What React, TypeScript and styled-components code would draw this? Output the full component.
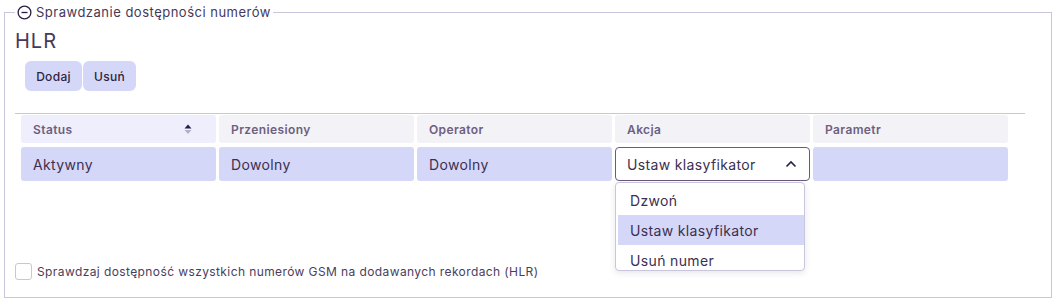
import styled, { createGlobalStyle } from "styled-components";

// GLOBAL
const GlobalStyle = createGlobalStyle`
  * { box-sizing: border-box; }
  body {
    margin: 0;
    background: #ffffff;
    font-family: Inter, "Open Sans", sans-serif;
    color: #3c2f50;
  }
`;

// STYLED
const Frame = styled.fieldset`
  margin: 3px 6px 6px 4px;
  padding: 7px 10px 17px 10px;
  border: 1px solid #c9c5dc;
  min-width: 0;
`;
const Legend = styled.legend`
  display: flex;
  align-items: center;
  gap: 4px;
  padding: 0 2px;
  font-size: 13px;
  line-height: 18px;
  letter-spacing: 0.5px;
  color: #45385a;
  svg {
    display: block;
  }
`;
const Title = styled.h2`
  margin: 0;
  font-size: 20px;
  font-weight: 400;
  line-height: 26px;
  letter-spacing: 1px;
  color: #45385a;
`;
const Toolbar = styled.div`
  display: flex;
  gap: 1px;
  margin: 7px 0 0 10px;
`;
const ToolButton = styled.button<{ $w: number }>`
  width: ${(p) => p.$w}px;
  height: 30px;
  border: none;
  border-radius: 6px;
  background: #d5d7f8;
  color: #2f2440;
  font-family: inherit;
  font-size: 12px;
  font-weight: 500;
  letter-spacing: 0.3px;
  cursor: pointer;
`;
const TableWrap = styled.div`
  position: relative;
  margin-top: 22px;
  width: 1010px;
  height: 150px;
  padding: 1px 0 0 6px;
  border-top: 1px solid #c9c5dc;
`;
const Grid = styled.div`
  display: grid;
  grid-template-columns: repeat(5, 195px);
  grid-template-rows: 28px 34px;
  column-gap: 3px;
  row-gap: 4px;
`;
const HeadCell = styled.div<{ $sorted?: boolean }>`
  display: flex;
  align-items: center;
  justify-content: space-between;
  padding: 0 24px 0 12px;
  border-radius: 3px;
  background: ${(p) => (p.$sorted ? "#eeeefc" : "#f3f2f7")};
  color: #6d5f80;
  font-size: 12px;
  font-weight: 600;
  letter-spacing: 0.4px;
`;
const BodyCell = styled.div`
  display: flex;
  align-items: center;
  padding: 0 12px;
  border-radius: 3px;
  background: #d5d7f8;
  font-size: 14px;
  letter-spacing: 0.35px;
  color: #3c2f50;
`;
const SelectBox = styled.div`
  position: relative;
  display: flex;
  align-items: center;
  justify-content: space-between;
  padding: 0 12px 0 11px;
  border: 1px solid #6a5b7e;
  border-radius: 4px;
  background: #ffffff;
  font-size: 14px;
  letter-spacing: 0.35px;
  color: #3c2f50;
`;
const Menu = styled.ul`
  position: absolute;
  top: 34px;
  left: -1px;
  width: 190px;
  height: 89px;
  margin: 0;
  padding: 2px 0 0 2px;
  list-style: none;
  overflow: hidden;
  background: #ffffff;
  border: 1px solid #c9c5dc;
  border-radius: 4px;
  box-shadow: 0 2px 6px rgba(60, 47, 80, 0.12);
  z-index: 2;
`;
const MenuItem = styled.li<{ $active?: boolean }>`
  height: 30px;
  display: flex;
  align-items: center;
  padding-left: 12px;
  font-size: 14px;
  letter-spacing: 0.35px;
  color: #3c2f50;
  background: ${(p) => (p.$active ? "#d5d7f8" : "transparent")};
`;
const CheckRow = styled.label`
  display: flex;
  align-items: center;
  gap: 5px;
  font-size: 12px;
  letter-spacing: 0.4px;
  color: #4a3d5c;
`;
const CheckBox = styled.span`
  width: 17px;
  height: 17px;
  border: 1px solid #c9c5dc;
  border-radius: 3px;
  background: #ffffff;
`;

// ICONS
const MinusCircle = () => (
  <svg width="15" height="15" viewBox="0 0 16 16">
    <circle cx="8" cy="8" r="6.8" fill="none" stroke="#2b1e40" strokeWidth="1.4" />
    <line x1="4.8" y1="8" x2="11.2" y2="8" stroke="#2b1e40" strokeWidth="1.4" />
  </svg>
);
const SortIcon = () => (
  <svg width="8" height="11" viewBox="0 0 8 11">
    <path d="M4 0.5 L7.5 4.5 H0.5 Z" fill="#2a1a4a" />
    <path d="M0.5 6 H7.5 L4 10 Z" fill="#b4b0bf" />
  </svg>
);
const ChevronUp = () => (
  <svg width="12" height="8" viewBox="0 0 12 8">
    <path d="M1.5 6.5 L6 2 L10.5 6.5" fill="none" stroke="#2b1e40" strokeWidth="1.6" />
  </svg>
);

const columns = ["Status", "Przeniesiony", "Operator", "Akcja", "Parametr"];
const options = ["Dzwoń", "Ustaw klasyfikator", "Usuń numer"];

const App = () => {
  return (
    <>
      <GlobalStyle />
      <Frame>
        <Legend>
          <MinusCircle />
          Sprawdzanie dostępności numerów
        </Legend>
        <Title>HLR</Title>
        <Toolbar>
          <ToolButton $w={57}>Dodaj</ToolButton>
          <ToolButton $w={53}>Usuń</ToolButton>
        </Toolbar>
        <TableWrap>
          <Grid>
            {columns.map((col) => (
              <HeadCell key={col} $sorted={col === "Status"}>
                {col}
                {col === "Status" && <SortIcon />}
              </HeadCell>
            ))}
            <BodyCell>Aktywny</BodyCell>
            <BodyCell>Dowolny</BodyCell>
            <BodyCell>Dowolny</BodyCell>
            <SelectBox>
              Ustaw klasyfikator
              <ChevronUp />
              <Menu>
                {options.map((opt) => (
                  <MenuItem key={opt} $active={opt === "Ustaw klasyfikator"}>
                    {opt}
                  </MenuItem>
                ))}
              </Menu>
            </SelectBox>
            <BodyCell />
          </Grid>
        </TableWrap>
        <CheckRow>
          <CheckBox />
          Sprawdzaj dostępność wszystkich numerów GSM na dodawanych rekordach (HLR)
        </CheckRow>
      </Frame>
    </>
  );
};

export default App;
